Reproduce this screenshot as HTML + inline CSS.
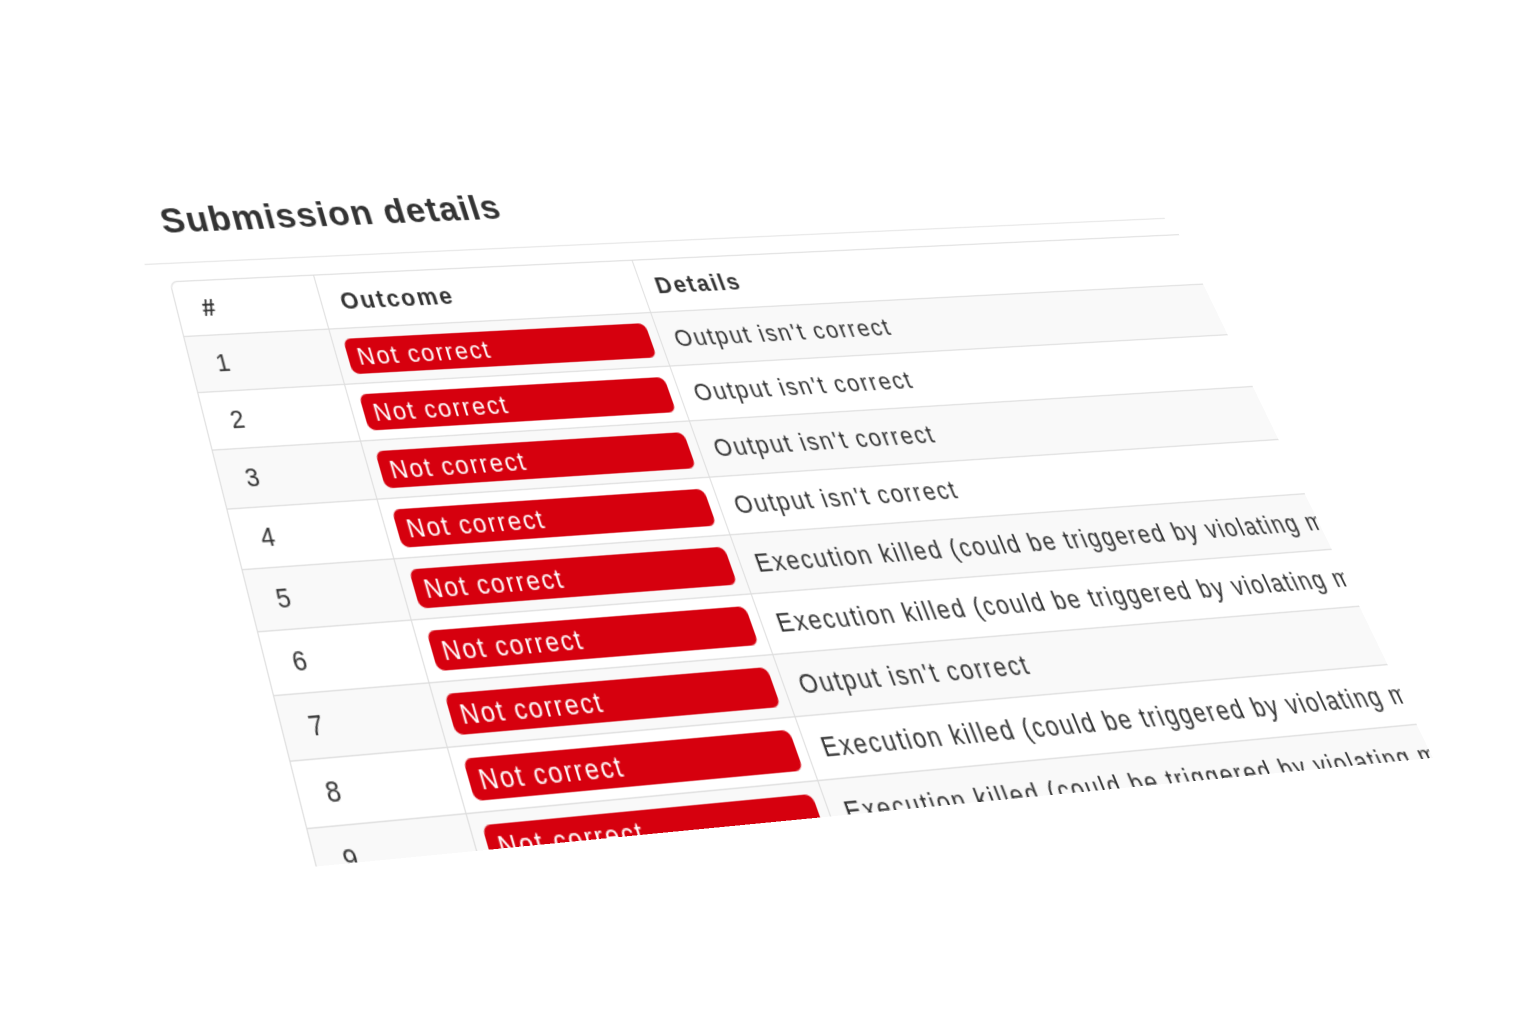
<!DOCTYPE html>
<html>
<head>
<meta charset="utf-8">
<style>
html,body{margin:0;padding:0;background:#fff;width:1522px;height:1027px;overflow:hidden;}
#plane{position:absolute;left:0;top:0;width:1px;height:1px;transform-origin:0 0;
  transform:matrix3d(1.083630,-0.024551,0,0.00009016, 0.228506,1.011392,0,-0.00024576, 0,0,1,0, 169.326,281.301,0,1);}
#clip{position:absolute;left:-40px;top:-100px;width:1073px;height:578px;overflow:hidden;}
#inner{position:absolute;left:40px;top:100px;width:1033px;}
h2{position:absolute;left:6px;top:-73px;margin:0;font:bold 34px/35px "Liberation Sans",Arial,sans-serif;letter-spacing:1.2px;color:#333;white-space:nowrap;}
.hr{position:absolute;left:-19px;top:-17px;width:1045px;height:1px;background:#e4e4e4;}
table{position:absolute;left:0;top:0;border-collapse:separate;border-spacing:0;table-layout:fixed;width:1033px;
  font-family:"Liberation Sans",Arial,sans-serif;font-size:22px;letter-spacing:1.8px;color:#333;}
td,th{height:49px;border-top:1px solid #ddd;border-left:1px solid #ddd;padding:0;white-space:nowrap;overflow:hidden;vertical-align:middle;text-align:left;}
th{font-weight:bold;font-size:22px;letter-spacing:2px;}
tr:first-child th:first-child{border-top-left-radius:7px;}
tbody tr:nth-child(odd) td{background:#f9f9f9;}
.c1{padding-left:23px;}
.c2{padding-left:10px;padding-right:9px;}
th.c2{padding-left:18px;}
.c3{padding-left:14px;}
.badge{display:block;height:32px;line-height:33px;background:#d6000e;color:#fff;border-radius:7px;padding-left:9px;font-size:22px;letter-spacing:1.8px;}
</style>
</head>
<body>
<div id="plane">
 <div id="clip">
  <div id="inner">
   <h2>Submission details</h2>
   <div class="hr"></div>
   <table>
    <colgroup><col style="width:136px"><col style="width:314px"><col style="width:583px"></colgroup>
    <thead><tr><th class="c1">#</th><th class="c2">Outcome</th><th class="c3">Details</th></tr></thead>
    <tbody>
     <tr><td class="c1">1</td><td class="c2"><span class="badge">Not correct</span></td><td class="c3">Output isn't correct</td></tr>
     <tr><td class="c1">2</td><td class="c2"><span class="badge">Not correct</span></td><td class="c3">Output isn't correct</td></tr>
     <tr><td class="c1">3</td><td class="c2"><span class="badge">Not correct</span></td><td class="c3">Output isn't correct</td></tr>
     <tr><td class="c1">4</td><td class="c2"><span class="badge">Not correct</span></td><td class="c3">Output isn't correct</td></tr>
     <tr><td class="c1">5</td><td class="c2"><span class="badge">Not correct</span></td><td class="c3">Execution killed (could be triggered by violating memory limits)</td></tr>
     <tr><td class="c1">6</td><td class="c2"><span class="badge">Not correct</span></td><td class="c3">Execution killed (could be triggered by violating memory limits)</td></tr>
     <tr><td class="c1">7</td><td class="c2"><span class="badge">Not correct</span></td><td class="c3">Output isn't correct</td></tr>
     <tr><td class="c1">8</td><td class="c2"><span class="badge">Not correct</span></td><td class="c3">Execution killed (could be triggered by violating memory limits)</td></tr>
     <tr><td class="c1">9</td><td class="c2"><span class="badge">Not correct</span></td><td class="c3">Execution killed (could be triggered by violating memory limits)</td></tr>
     <tr><td class="c1">10</td><td class="c2"><span class="badge">Not correct</span></td><td class="c3">Output isn't correct</td></tr>
    </tbody>
   </table>
  </div>
 </div>
</div>
</body>
</html>
